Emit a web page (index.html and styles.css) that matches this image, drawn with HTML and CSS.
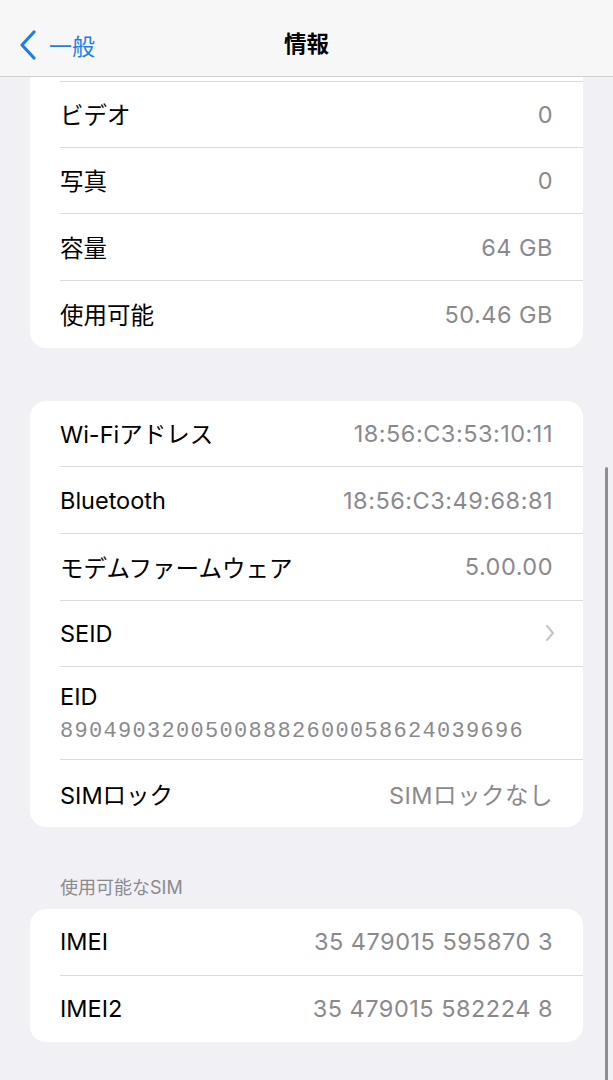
FILE: index.html
```html
<!DOCTYPE html>
<html lang="ja">
<head>
  <meta charset="UTF-8" />
  <meta name="viewport" content="width=device-width, initial-scale=1.0"/>
  <title>情報</title>
  <link rel="stylesheet" href="styles.css">
</head>
<body>

<header class="navbar">
  <a class="back" href="#">
    <svg class="back-icon" viewBox="0 0 18 30" width="18" height="30">
      <path d="M15 2 L3 15 L15 28" fill="none" stroke="currentColor" stroke-width="3.2" stroke-linecap="round" stroke-linejoin="round"/>
    </svg>
    <span>一般</span>
  </a>
  <h1 class="title">情報</h1>
</header>

<main class="content">
  <div class="group first">
    <div class="row"><span class="label">ビデオ</span><span class="value">0</span></div>
    <div class="row"><span class="label">写真</span><span class="value">0</span></div>
    <div class="row"><span class="label">容量</span><span class="value">64 GB</span></div>
    <div class="row"><span class="label">使用可能</span><span class="value">50.46 GB</span></div>
  </div>

  <div class="group">
    <div class="row"><span class="label">Wi-Fiアドレス</span><span class="value">18:56:C3:53:10:11</span></div>
    <div class="row"><span class="label">Bluetooth</span><span class="value">18:56:C3:49:68:81</span></div>
    <div class="row"><span class="label">モデムファームウェア</span><span class="value">5.00.00</span></div>
    <div class="row">
      <span class="label">SEID</span>
      <svg class="chevron" viewBox="0 0 10 18" width="10" height="18">
        <path d="M2 2 L8 9 L2 16" fill="none" stroke="currentColor" stroke-width="2" stroke-linecap="round" stroke-linejoin="round"/>
      </svg>
    </div>
    <div class="row stacked">
      <span class="label">EID</span>
      <span class="eid">89049032005008882600058624039696</span>
    </div>
    <div class="row"><span class="label">SIMロック</span><span class="value">SIMロックなし</span></div>
  </div>

  <p class="group-title">使用可能なSIM</p>
  <div class="group">
    <div class="row"><span class="label">IMEI</span><span class="value">35 479015 595870 3</span></div>
    <div class="row"><span class="label">IMEI2</span><span class="value">35 479015 582224 8</span></div>
  </div>
</main>

<div class="scrollbar"></div>

</body>
</html>
```

FILE: styles.css
```css
body {
  margin: 0;
  background-color: #f0f0f5;
  font-family: Inter, "Noto Sans CJK JP", sans-serif;
  color: #000;
}

.navbar {
  position: fixed;
  top: 0;
  left: 0;
  right: 0;
  height: 76px;
  background-color: #f7f7f7;
  border-bottom: 1px solid #cfcfd2;
  display: flex;
  align-items: center;
  justify-content: center;
  z-index: 2;
}

.back {
  position: absolute;
  left: 19px;
  top: 28px;
  display: flex;
  align-items: center;
  gap: 12px;
  color: #1d7fe0;
  text-decoration: none;
  font-size: 23px;
}

.back-icon {
  display: block;
}

.title {
  margin: 0;
  font-size: 22.5px;
  font-weight: 700;
  padding-top: 8px;
}

.content {
  padding: 77px 30px 60px;
}

.group {
  background: #fff;
  border-radius: 16px;
  overflow: hidden;
  margin-bottom: 53px;
}

/* list is scrolled: its top edge sits under the nav bar */
.group.first {
  border-radius: 0 0 16px 16px;
  padding-top: 4px;
}

.group.first .row:first-child {
  border-top: 1px solid #dcdcde;
}

.row {
  box-sizing: border-box;
  height: 66.67px;
  margin-left: 30px;
  padding-right: 30px;
  display: flex;
  align-items: center;
  justify-content: space-between;
  border-bottom: 1px solid #dcdcde;
  font-size: 23.5px;
}

.row:last-child {
  border-bottom: none;
}

.label {
  color: #000;
}

.value {
  color: #8a8a8e;
  letter-spacing: 0.5px;
}

.chevron {
  color: #c4c4c7;
  margin-right: -2px;
}

.row.stacked {
  height: 93px;
  flex-direction: column;
  align-items: flex-start;
  justify-content: center;
  gap: 8px;
}

.eid {
  font-family: "Liberation Mono", monospace;
  font-size: 22px;
  letter-spacing: 1.3px;
  color: #8a8a8e;
}

.group-title {
  margin: -7px 0 10px 30px;
  font-size: 18px;
  color: #8a8a8e;
}

.scrollbar {
  position: fixed;
  right: 5px;
  top: 467px;
  width: 3px;
  height: 640px;
  border-radius: 2px;
  background: #8e8e92;
}
```
